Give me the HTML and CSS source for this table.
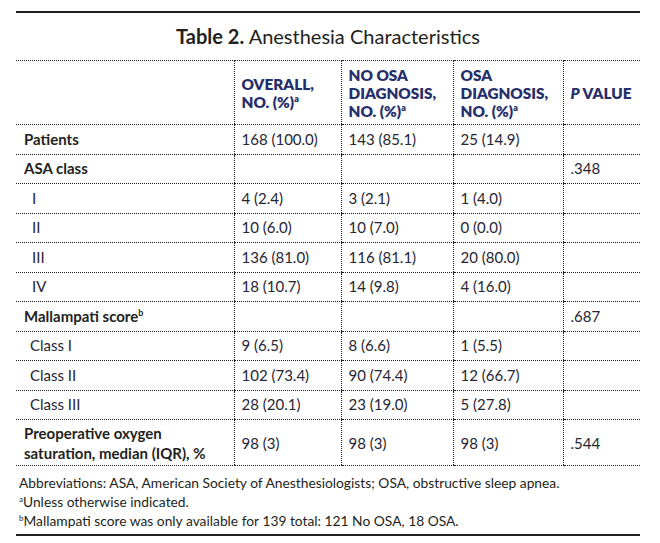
FILE: index.html
```html
<!DOCTYPE html>
<html>
<head>
<meta charset="utf-8">
<link rel="stylesheet" href="styles.css">
</head>
<body>
<div class="page">
  <div class="rule"></div>
  <h1 class="title"><b>Table 2.</b> Anesthesia Characteristics</h1>
  <table class="tbl">
    <colgroup>
      <col class="c-label"><col class="c-all"><col class="c-no"><col class="c-osa"><col class="c-p">
    </colgroup>
    <thead>
      <tr>
        <th></th>
        <th>OVERALL,<br>NO. (%)<sup>a</sup></th>
        <th>NO OSA<br>DIAGNOSIS,<br>NO. (%)<sup>a</sup></th>
        <th>OSA<br>DIAGNOSIS,<br>NO. (%)<sup>a</sup></th>
        <th><i>P</i> VALUE</th>
      </tr>
    </thead>
    <tbody>
      <tr><td class="lbl">Patients</td><td>168 (100.0)</td><td>143 (85.1)</td><td>25 (14.9)</td><td></td></tr>
      <tr><td class="lbl">ASA class</td><td></td><td></td><td></td><td>.348</td></tr>
      <tr><td class="sub">I</td><td>4 (2.4)</td><td>3 (2.1)</td><td>1 (4.0)</td><td></td></tr>
      <tr><td class="sub">II</td><td>10 (6.0)</td><td>10 (7.0)</td><td>0 (0.0)</td><td></td></tr>
      <tr><td class="sub">III</td><td>136 (81.0)</td><td>116 (81.1)</td><td>20 (80.0)</td><td></td></tr>
      <tr><td class="sub">IV</td><td>18 (10.7)</td><td>14 (9.8)</td><td>4 (16.0)</td><td></td></tr>
      <tr><td class="lbl">Mallampati score<sup>b</sup></td><td></td><td></td><td></td><td>.687</td></tr>
      <tr><td class="sub2">Class I</td><td>9 (6.5)</td><td>8 (6.6)</td><td>1 (5.5)</td><td></td></tr>
      <tr><td class="sub2">Class II</td><td>102 (73.4)</td><td>90 (74.4)</td><td>12 (66.7)</td><td></td></tr>
      <tr><td class="sub2">Class III</td><td>28 (20.1)</td><td>23 (19.0)</td><td>5 (27.8)</td><td></td></tr>
      <tr class="tall"><td class="lbl">Preoperative oxygen<br>saturation, median (IQR), %</td><td>98 (3)</td><td>98 (3)</td><td>98 (3)</td><td>.544</td></tr>
    </tbody>
  </table>
  <div class="notes">
    <p>Abbreviations: ASA, American Society of Anesthesiologists; OSA, obstructive sleep apnea.</p>
    <p><sup>a</sup>Unless otherwise indicated.</p>
    <p><sup>b</sup>Mallampati score was only available for 139 total: 121 No OSA, 18 OSA.</p>
  </div>
  <div class="rule"></div>
</div>
</body>
</html>
```

FILE: styles.css
```css
html, body {
  margin: 0;
  padding: 0;
  background: #ffffff;
}
body {
  font-family: Lato, "Open Sans", sans-serif;
  color: #231f20;
}
.page {
  width: 624px;
  margin-left: 16px;
  padding-top: 11px;
}
.rule {
  border-top: 2px solid #231f20;
}
.title {
  margin: 11px 0 12px;
  font-size: 20px;
  line-height: 24px;
  font-weight: 400;
  text-align: center;
  color: #231f20;
}
.title b {
  font-weight: 700;
}
.tbl {
  width: 624px;
  border-collapse: collapse;
  table-layout: fixed;
  font-size: 15px;
}
.c-label { width: 218px; }
.c-all { width: 107px; }
.c-no { width: 112px; }
.c-osa { width: 110px; }
.c-p { width: 77px; }
.tbl th, .tbl td {
  border-top: 1px dotted #231f20;
  border-bottom: 1px dotted #231f20;
  border-left: 1px dotted #231f20;
  padding: 0 0 0 7px;
  vertical-align: middle;
  text-align: left;
}
.tbl th:first-child, .tbl td:first-child {
  border-left: none;
}
.tbl th {
  height: 63px;
  font-weight: 800;
  color: #262f6b;
  line-height: 18px;
  font-size: 15.3px;
}
.tbl th sup, .tbl td sup {
  font-size: 9px;
  line-height: 0;
  vertical-align: 6px;
}
.tbl td {
  height: 28.5px;
  line-height: 19px;
  color: #262633;
}
.tbl td.lbl {
  font-weight: 700;
  color: #231f20;
  padding-left: 8px;
}
.tbl td.sub {
  padding-left: 16px;
}
.tbl td.sub2 {
  padding-left: 14px;
}
.tbl tr.tall td {
  height: 45px;
  line-height: 20px;
}
.notes {
  padding: 7px 0 4px 3px;
  font-size: 13.8px;
  line-height: 19px;
  color: #231f20;
}
.notes p {
  margin: 0;
}
.notes sup {
  font-size: 8px;
  line-height: 0;
  vertical-align: 5px;
}
```
